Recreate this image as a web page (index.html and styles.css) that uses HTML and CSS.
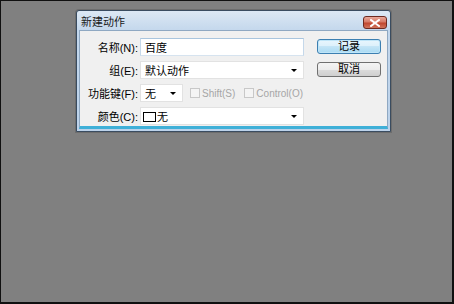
FILE: index.html
```html
<!DOCTYPE html>
<html lang="zh-CN">
<head>
    <meta charset="UTF-8">
    <title>新建动作</title>
    <link rel="stylesheet" href="styles.css">
</head>
<body>
    <div class="screen">
        <div class="dialog">
            <div class="titlebar">
                <span class="title">新建动作</span>
                <span class="close">
                    <svg width="10" height="8" viewBox="0 0 10 8">
                        <path d="M1 1 L9 7 M9 1 L1 7" stroke="#fff" stroke-width="2" stroke-linecap="square"/>
                    </svg>
                </span>
            </div>
            <div class="body">
                <div class="form">
                    <label class="label">名称(N):</label>
                    <div class="field input">百度</div>

                    <label class="label">组(E):</label>
                    <div class="field select">
                        <span>默认动作</span>
                        <span class="arrow"></span>
                    </div>

                    <label class="label">功能键(F):</label>
                    <div class="keys">
                        <div class="field select small">
                            <span>无</span>
                            <span class="arrow"></span>
                        </div>
                        <span class="check"><span class="box"></span>Shift(S)</span>
                        <span class="check wide"><span class="box"></span>Control(O)</span>
                    </div>

                    <label class="label">颜色(C):</label>
                    <div class="field select">
                        <span><span class="swatch"></span>无</span>
                        <span class="arrow"></span>
                    </div>
                </div>
                <div class="buttons">
                    <button class="btn default">记录</button>
                    <button class="btn">取消</button>
                </div>
            </div>
        </div>
    </div>
</body>
</html>
```

FILE: styles.css
```css
html, body {
    margin: 0;
    padding: 0;
}
body {
    font: 11px "Liberation Sans", "Noto Sans CJK SC", sans-serif;
    color: #000;
}
.screen {
    width: 454px;
    height: 304px;
    box-sizing: border-box;
    background: #808080;
    border-style: solid;
    border-color: #101010;
    border-width: 1px 2px 2px 1px;
    padding: 9px 0 0 75px;
}
.dialog {
    width: 315px;
    height: 122px;
    box-sizing: border-box;
    border: 1px solid #3a4c60;
    border-radius: 3px 3px 0 0;
    background: linear-gradient(#dce8f4, #c3d7ec 20px, #bcd2ea);
    display: flex;
    flex-direction: column;
    box-shadow: 0 0 0 1px rgba(0, 0, 0, 0.15);
}
.titlebar {
    height: 19px;
    display: flex;
    align-items: center;
    justify-content: space-between;
    padding: 0 3px 0 4px;
}
.title {
    font-size: 11px;
    color: #1a1a1a;
}
.close {
    width: 24px;
    height: 13px;
    box-sizing: border-box;
    border: 1px solid #6d2a20;
    border-radius: 3px;
    background: linear-gradient(#e9a99b, #d67a66 45%, #c0472f 55%, #d0745c);
    display: flex;
    align-items: center;
    justify-content: center;
    margin-top: 4px;
}
.body {
    flex: 1;
    margin: 0 2px 2px 2px;
    background: #f0f0f0;
    border: 1px solid #8fa8c2;
    border-bottom: 3px solid #3fb0d8;
    display: flex;
    padding: 7px 6px 0 0;
}
.form {
    display: grid;
    grid-template-columns: 58px 164px;
    grid-auto-rows: 18px;
    row-gap: 5px;
    column-gap: 2px;
    align-items: center;
}
.label {
    text-align: right;
    white-space: nowrap;
}
.field {
    height: 18px;
    box-sizing: border-box;
    background: #fff;
    border: 1px solid #c9cdd3;
    display: flex;
    align-items: center;
    padding: 0 4px;
}
.input {
    border-color: #a9c5de #c5d8ea #d6e3ef #c5d8ea;
}
.select {
    justify-content: space-between;
    border-color: #e2e2e2;
}
.arrow {
    width: 0;
    height: 0;
    border-left: 3px solid transparent;
    border-right: 3px solid transparent;
    border-top: 3px solid #000;
    margin-right: 2px;
}
.keys {
    display: flex;
    align-items: center;
    height: 18px;
}
.small {
    width: 43px;
    flex-shrink: 0;
}
.check {
    display: flex;
    align-items: center;
    color: #a6a6a6;
    font-size: 10px;
    margin-left: 7px;
    white-space: nowrap;
}
.wide {
    margin-left: 9px;
}
.box {
    width: 10px;
    height: 10px;
    box-sizing: border-box;
    border: 1px solid #c8c8c8;
    background: #f4f4f4;
    margin-right: 2px;
}
.swatch {
    display: inline-block;
    width: 13px;
    height: 10px;
    box-sizing: border-box;
    border: 1px solid #000;
    background: #fff;
    vertical-align: -1px;
    margin: 0 1px 0 -2px;
}
.buttons {
    margin-left: 13px;
    display: flex;
    flex-direction: column;
    gap: 8px;
    padding-top: 1px;
}
.btn {
    width: 64px;
    height: 15px;
    padding: 0;
    font: inherit;
    color: #000;
    border: 1px solid #707070;
    border-radius: 3px;
    background: linear-gradient(#f4f4f4, #ececec 50%, #dcdcdc 50%, #cfcfcf);
    line-height: 13px;
}
.default {
    border-color: #3c7fb1;
    background: linear-gradient(#e8f6fd, #dcf0fb 50%, #c4e5f6 50%, #a9daf3);
    box-shadow: inset 0 0 0 1px #bfe5f8;
}
```
